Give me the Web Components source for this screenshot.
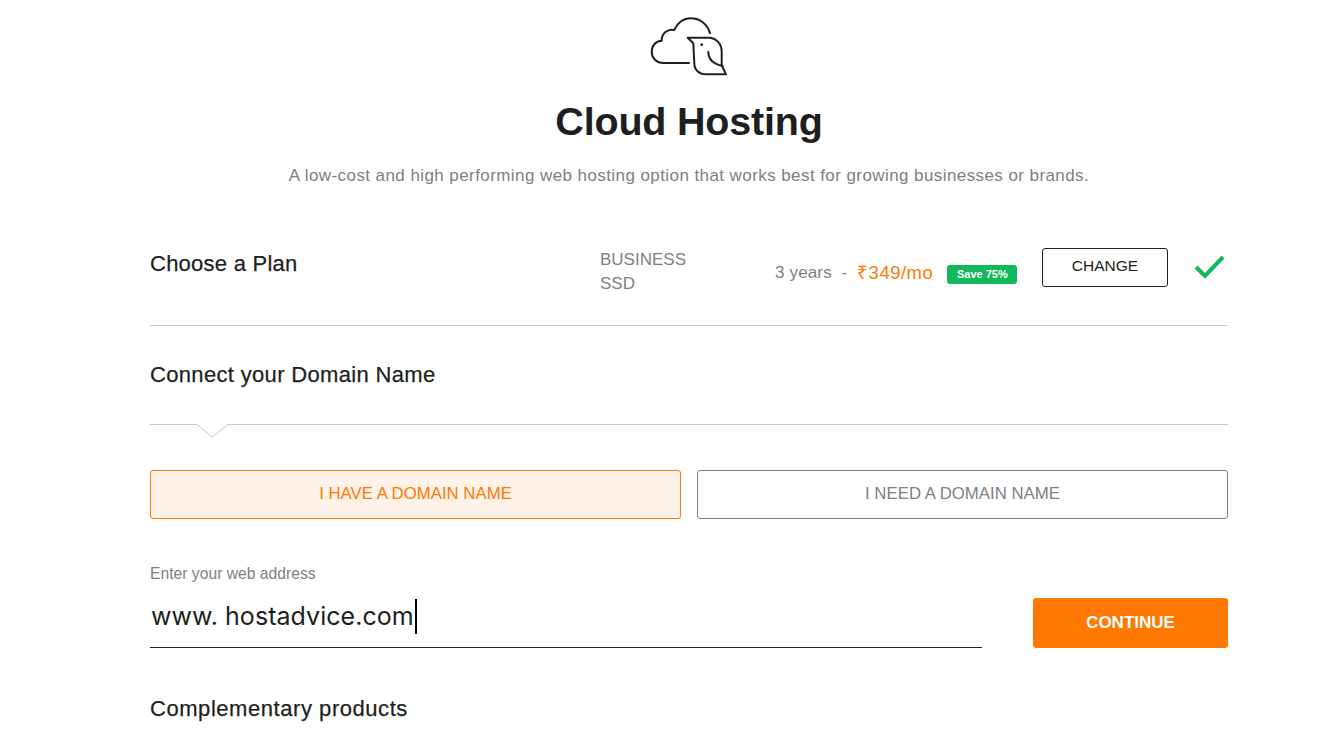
<!DOCTYPE html>
<html lang="en">
<head>
<meta charset="utf-8">
<title>Cloud Hosting</title>
<style>
  html, body { margin: 0; padding: 0; background: #fff; overflow: hidden; height: 749px; }
  body { font-family: "Liberation Sans", Arial, sans-serif; color: #1d1f20; }
</style>
</head>
<body>
<checkout-page>
  <hosting-header title="Cloud Hosting" text="A low-cost and high performing web hosting option that works best for growing businesses or brands."></hosting-header>
  <plan-row></plan-row>
  <domain-step></domain-step>
  <section-title style="margin-top:46px;letter-spacing:.55px">Complementary products</section-title>
</checkout-page>

<script>
class CheckoutPage extends HTMLElement {
  constructor() {
    super();
    this.attachShadow({ mode: "open" });
    this.shadowRoot.innerHTML = `
    <style>
      :host { display: block; width: 1078px; margin-left: 150px; }
    </style>
    <slot></slot>`;
  }
}

class HostingHeader extends HTMLElement {
  constructor() {
    super();
    this.attachShadow({ mode: "open" });
  }

  connectedCallback() {
    this.shadowRoot.innerHTML = `
    <style>
      :host { display: flex; flex-direction: column; align-items: center; padding-top: 15px; }
      svg { display: block; width: 78px; height: 62px; }
      h1 { margin: 20px 0 0; font-size: 39.500px; line-height: 48px; font-weight: 700; color: #1d1f20; letter-spacing: -.2px; }
      p { margin: 19px 0 0; font-size: 17px; line-height: 24px; color: #808080; letter-spacing: .42px; }
    </style>
    <svg viewBox="0 0 78 62" fill="none" stroke="#1d1f20" stroke-width="2" stroke-linejoin="round" stroke-linecap="round">
      <path d="M39 48H13.500C6.500 48 1.700 43 1.700 36.700C1.700 30.500 6 26 11.700 25.700C11.500 18.500 17.500 13.500 24.300 15C27.500 8 33 3.300 40.500 3.300C50.500 3.300 57.500 9.500 60 18.300"/>
      <path d="M37.700 22.700H58.300C66.500 22.700 71.700 29 71.700 36.700V50L76 59.300H56C49 59.300 44.300 55 44.300 48.300L43.300 28.300Z"/>
      <path d="M58.300 36.700C58.300 45 63.500 49 72.700 51"/>
      <circle cx="51.700" cy="29.700" r="1.400" fill="#1d1f20" stroke="none"/>
    </svg>
    <h1>${this.getAttribute("title")}</h1>
    <p>${this.getAttribute("text")}</p>`;
  }
}

class PlanRow extends HTMLElement {
  constructor() {
    super();
    this.attachShadow({ mode: "open" });
    this.shadowRoot.innerHTML = `
    <style>
      :host { display: flex; align-items: flex-start; margin-top: 47px; border-bottom: 1px solid #c8c8c8; box-sizing: border-box; height: 91px; padding-top: 14px; }
      h2 { margin: 0; width: 450px; font-size: 22px; line-height: 30px; font-weight: 400; letter-spacing: .25px; color: #1d1f20; -webkit-text-stroke: .25px #1d1f20; }
      .name { width: 175px; margin-top: -3px; padding-top: 2px; font-size: 17px; line-height: 24px; color: #808080; }
      .price { display: flex; align-items: center; font-size: 17px; line-height: 24px; color: #808080; margin-top: 12px; white-space: pre; width: 267px; }
      .years { letter-spacing: .15px; }
      .amount { color: #ff7800; font-size: 18.500px; letter-spacing: .5px; }
      .save { margin-left: 14px; width: 70px; height: 19px; background: #10b95a; border-radius: 3px; color: #fff; font-size: 11px; font-weight: 700; line-height: 19px; text-align: center; margin-top: 3px; }
      button { width: 126px; height: 39px; margin-top: -1px; background: #fff; border: 1px solid #1d1f20; border-radius: 3px; font: 15.500px "Liberation Sans", Arial, sans-serif; color: #1d1f20; padding: 0 0 3px; flex: none; }
      svg { width: 32px; height: 26px; margin: 5px 0 0 26px; flex: none; }
    </style>
    <h2>Choose a Plan</h2>
    <div class="name">BUSINESS<br>SSD</div>
    <div class="price"><span class="years">3 years  -  </span><span class="amount">₹349/mo</span><span class="save">Save 75%</span></div>
    <button>CHANGE</button>
    <svg viewBox="0 0 32 26" fill="none" stroke="#10b95a" stroke-width="4"><path d="M2 13L11 22L29 3"/></svg>`;
  }
}

class SectionTitle extends HTMLElement {
  constructor() {
    super();
    this.attachShadow({ mode: "open" });
    this.shadowRoot.innerHTML = `
    <style>
      :host { display: block; font-size: 22px; line-height: 30px; letter-spacing: .33px; color: #1d1f20; -webkit-text-stroke: .25px #1d1f20; }
    </style>
    <slot></slot>`;
  }
}

class NotchLine extends HTMLElement {
  constructor() {
    super();
    this.attachShadow({ mode: "open" });
    this.shadowRoot.innerHTML = `
    <style>
      :host { display: block; height: 14px; }
      svg { display: block; width: 100%; height: 14px; overflow: visible; }
    </style>
    <svg viewBox="0 0 1078 14" fill="none" stroke="#c8c8c8" stroke-width="1">
      <path d="M0 .5H47L62 13L78 .5H1078"/>
    </svg>`;
  }
}

class ChoiceButton extends HTMLElement {
  constructor() {
    super();
    this.attachShadow({ mode: "open" });
    this.shadowRoot.innerHTML = `
    <style>
      :host { display: flex; align-items: center; justify-content: center; height: 49px; padding-bottom: 2px; box-sizing: border-box; border: 1px solid #808080; border-radius: 3px; font-size: 16.800px; color: #808080; }
      :host([active]) { border-color: #ff7800; background: #fff3e9; color: #ff7800; }
    </style>
    <slot></slot>`;
  }
}

class DomainField extends HTMLElement {
  constructor() {
    super();
    this.attachShadow({ mode: "open" });
    this.shadowRoot.innerHTML = `
    <style>
      :host { display: flex; justify-content: space-between; align-items: flex-end; }
      .field { width: 832px; border-bottom: 1px solid #1d1f20; }
      label { display: block; font-size: 15.700px; line-height: 20px; color: #808080; padding-top: 1px; }
      .value { display: flex; align-items: center; height: 62px; padding-left: 1px; margin-top: 1px; font-family: "Inter", "Liberation Sans", sans-serif; font-size: 25px; color: #1d1f20; letter-spacing: .05px; }
      .caret { width: 2px; height: 35px; background: #000; margin-left: 1px; }
      button { width: 195px; height: 50px; background: #ff7800; border: 0; border-radius: 3px; color: #fff; font: 700 17px "Liberation Sans", Arial, sans-serif; padding: 0; }
    </style>
    <div class="field">
      <label>Enter your web address</label>
      <div class="value"><span>www. hostadvice.com</span><span class="caret"></span></div>
    </div>
    <button>CONTINUE</button>`;
  }
}

class DomainStep extends HTMLElement {
  constructor() {
    super();
    this.attachShadow({ mode: "open" });
    this.shadowRoot.innerHTML = `
    <style>
      :host { display: block; }
      .choices { display: grid; grid-template-columns: 531px 531px; gap: 16px; margin-top: 32px; }
      section-title { margin-top: 34px; }
      notch-line { margin-top: 34px; }
      domain-field { margin-top: 44px; }
    </style>
    <section-title>Connect your Domain Name</section-title>
    <notch-line></notch-line>
    <div class="choices">
      <choice-button active>I HAVE A DOMAIN NAME</choice-button>
      <choice-button>I NEED A DOMAIN NAME</choice-button>
    </div>
    <domain-field></domain-field>`;
  }
}

customElements.define("checkout-page", CheckoutPage);
customElements.define("hosting-header", HostingHeader);
customElements.define("plan-row", PlanRow);
customElements.define("section-title", SectionTitle);
customElements.define("notch-line", NotchLine);
customElements.define("choice-button", ChoiceButton);
customElements.define("domain-field", DomainField);
customElements.define("domain-step", DomainStep);
</script>
</body>
</html>
